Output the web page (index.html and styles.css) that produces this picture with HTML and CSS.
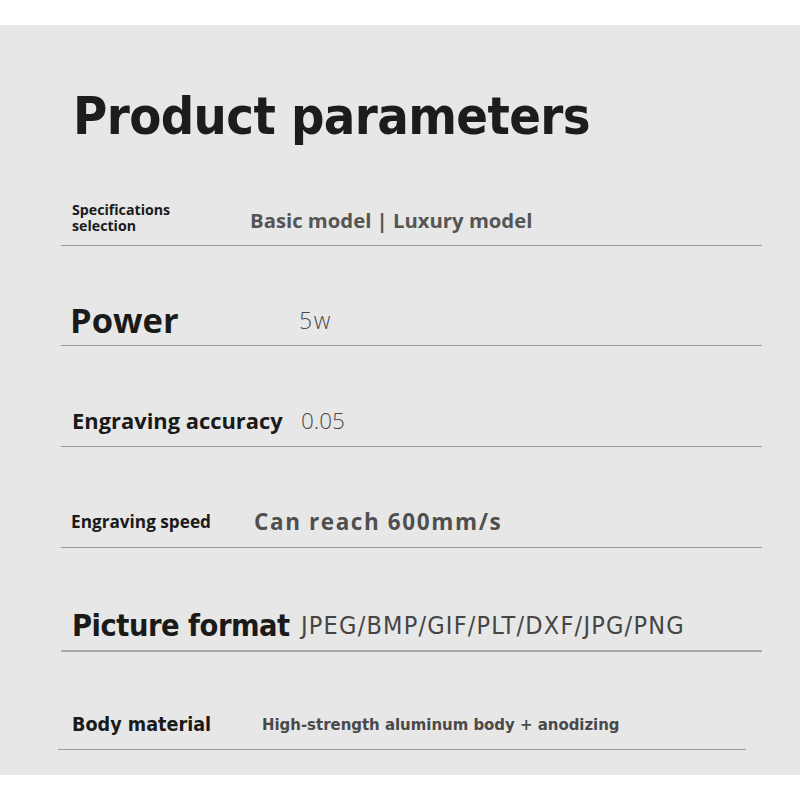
FILE: index.html
```html
<!DOCTYPE html>
<html>
<head>
<meta charset="utf-8">
<link rel="stylesheet" href="styles.css">
</head>
<body>
<div class="panel">
  <h1 class="title">Product parameters</h1>
  <div class="row r1">
    <div class="label l1">Specifications<br>selection</div>
    <div class="value v1">Basic model | Luxury model</div>
  </div>
  <div class="row r2">
    <div class="label l2">Power</div>
    <div class="value v2">5w</div>
  </div>
  <div class="row r3">
    <div class="label l3">Engraving accuracy</div>
    <div class="value v3">0.05</div>
  </div>
  <div class="row r4">
    <div class="label l4">Engraving speed</div>
    <div class="value v4">Can reach 600mm/s</div>
  </div>
  <div class="row r5">
    <div class="label l5">Picture format</div>
    <div class="value v5">JPEG/BMP/GIF/PLT/DXF/JPG/PNG</div>
  </div>
  <div class="row r6">
    <div class="label l6">Body material</div>
    <div class="value v6">High-strength aluminum body + anodizing</div>
  </div>
</div>
</body>
</html>
```
FILE: styles.css
```css
html, body {
  margin: 0;
  padding: 0;
  background: #ffffff;
}
.panel {
  margin-top: 25px;
  height: 750px;
  background: #e7e7e7;
  padding-top: 1px;
  box-sizing: border-box;
}
.title {
  margin: 0 0 0 73px;
  height: 120px;
  box-sizing: border-box;
  padding-top: 60px;
  font-family: "DejaVu Sans Condensed", "DejaVu Sans", sans-serif;
  font-weight: bold;
  font-size: 52px;
  line-height: 60px;
  color: #1c1c1c;
  letter-spacing: -0.6px;
}
.row {
  display: flex;
  align-items: center;
  margin: 0 38px 0 61px;
  padding-left: 11px;
  padding-top: 48px;
  height: 100px;
  box-sizing: border-box;
  border-bottom: 1px solid #9a9a9a;
}
.r1 { padding-top: 44px; }
.r2 { padding-top: 48px; }
.r3 { height: 101px; }
.r4 { height: 101px; }
.r5 { height: 104px; padding-top: 52px; border-bottom-width: 2px; border-bottom-color: #aaaaaa; }
.r6 { height: 98px; margin-right: 54px; margin-left: 58px; padding-left: 14px; }
.label {
  flex: none;
  color: #1a1a1a;
  font-weight: bold;
  font-family: "Open Sans", "Noto Sans", sans-serif;
}
.value {
  color: #4d4d4d;
  font-family: "Open Sans", "Noto Sans", sans-serif;
}
.l1 { width: 178px; font-size: 14.2px; line-height: 16px; }
.v1 { font-size: 20.3px; font-weight: bold; color: #555; padding-top: 4px; }
.l2 { width: 229px; font-size: 34.5px; line-height: 40px; margin-left: -2px; }
.v2 { font-size: 23px; font-weight: 300; color: #4a4a4a; letter-spacing: 1.5px; }
.l3 { width: 229px; font-size: 21.9px; }
.v3 { font-size: 22.5px; font-weight: 300; color: #4a4a4a; }
.l4 { width: 183px; font-size: 17.2px; margin-left: -1px; }
.v4 { font-size: 22.5px; font-weight: bold; letter-spacing: 1.6px; color: #4f4f4f; }
.l5 { width: 229px; font-size: 30.5px; font-family: "DejaVu Sans Condensed", "DejaVu Sans", sans-serif; letter-spacing: -0.5px; }
.v5 { font-size: 25px; font-family: "DejaVu Sans Condensed", "DejaVu Sans", sans-serif; font-weight: normal; color: #454545; letter-spacing: 1.2px; }
.l6 { width: 190px; font-size: 19.6px; font-family: "DejaVu Sans Condensed", "DejaVu Sans", sans-serif; }
.v6 { font-size: 16.6px; font-family: "DejaVu Sans Condensed", "DejaVu Sans", sans-serif; font-weight: bold; color: #4a4a4a; }
```
